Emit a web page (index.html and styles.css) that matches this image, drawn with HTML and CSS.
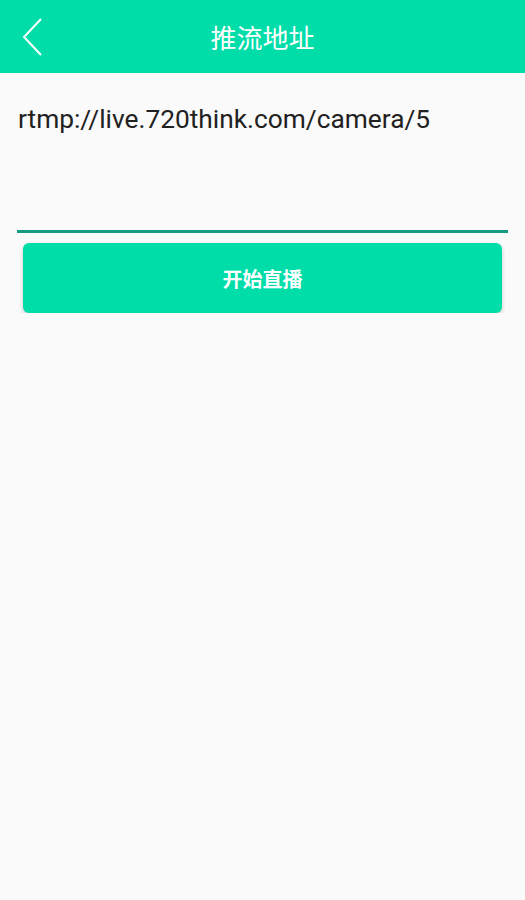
FILE: index.html
```html
<!DOCTYPE html>
<html lang="zh-CN">
<head>
    <meta charset="UTF-8">
    <meta name="viewport" content="width=device-width, initial-scale=1.0">
    <title>推流地址</title>
    <link rel="stylesheet" href="styles.css">
</head>
<body>
    <header class="toolbar">
        <button class="back-btn" aria-label="返回">
            <svg width="24" height="40" viewBox="0 0 24 40">
                <polyline points="20,2 3,20 20,38" fill="none" stroke="#fff" stroke-width="2" stroke-linejoin="miter"/>
            </svg>
        </button>
        <h1 class="toolbar-title">推流地址</h1>
    </header>

    <main class="content">
        <div class="url-field">rtmp://live.720think.com/camera/5</div>
        <button class="start-btn">开始直播</button>
    </main>
</body>
</html>
```

FILE: styles.css
```css
/* push url page */
body {
    margin: 0;
    background-color: #fafafa;
    font-family: Roboto, "Noto Sans", "Noto Sans CJK SC", sans-serif;
}

.toolbar {
    height: 73px;
    background-color: #00dda9;
    display: flex;
    align-items: center;
    justify-content: center;
    position: relative;
}

.back-btn {
    position: absolute;
    left: 21px;
    top: 17px;
    padding: 0;
    border: none;
    background: none;
}

.back-btn svg {
    display: block;
}

.toolbar-title {
    margin: 0;
    color: #fff;
    font-size: 26px;
    font-weight: normal;
    font-family: "Noto Sans CJK SC", sans-serif;
}

.content {
    padding: 0 17px 0 17px;
}

.url-field {
    height: 160px;
    padding: 31px 0 0 1px;
    box-sizing: border-box;
    border-bottom: 3px solid #169a80;
    font-size: 26.3px;
    color: #212121;
    line-height: 30px;
}

.start-btn {
    display: block;
    width: calc(100% - 12px);
    height: 70px;
    margin: 10px auto 0;
    border: none;
    border-radius: 6px;
    background-color: #00dda9;
    color: #fff;
    font-size: 20px;
    font-weight: bold;
    font-family: "Noto Sans CJK SC", sans-serif;
    box-shadow: 0 2px 4px rgba(0, 0, 0, 0.2);
}
```
